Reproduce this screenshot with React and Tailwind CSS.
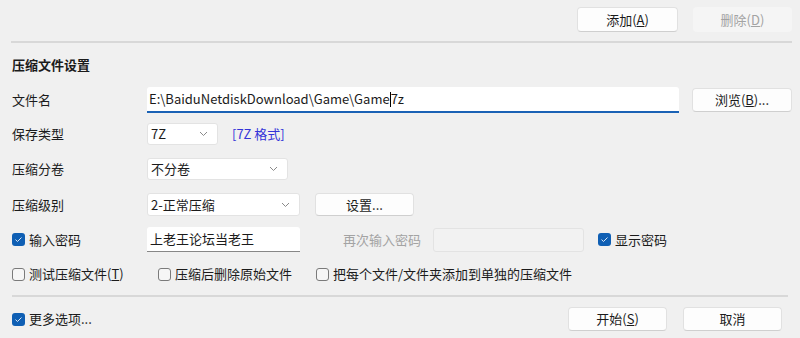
const FONT = { fontFamily: '"Noto Sans CJK SC", "Noto Sans", sans-serif' };

function Button({ children, disabled, className = "" }) {
  return (
    <div
      className={`flex items-center justify-center rounded-[4px] text-[13px] ${
        disabled
          ? "bg-[#f5f5f5] text-[#a3a3a3]"
          : "bg-[#fdfdfd] border border-[#e1e1e1] border-b-[#cfcfcf] text-[#1b1b1b]"
      } ${className}`}
    >
      {children}
    </div>
  );
}

function Chevron() {
  return (
    <svg width="9" height="6" viewBox="0 0 9 6" className="shrink-0">
      <polyline points="1,1 4.5,4.5 8,1" fill="none" stroke="#8a8a8a" strokeWidth="1" />
    </svg>
  );
}

function Select({ value, className = "" }) {
  return (
    <div className={`flex items-center justify-between bg-white border border-[#e3e3e3] rounded-[3px] pl-[3px] pr-[9px] text-[13px] text-[#1b1b1b] ${className}`}>
      <span>{value}</span>
      <Chevron />
    </div>
  );
}

function Checkbox({ checked, label }) {
  return (
    <div className="flex items-center gap-[4px] text-[13px] text-[#1b1b1b]">
      {checked ? (
        <div className="w-[13px] h-[13px] rounded-[3px] bg-[#0f5fb4] flex items-center justify-center">
          <svg width="9" height="7" viewBox="0 0 9 7">
            <polyline points="1.5,3.6 3.5,5.5 7.5,1.5" fill="none" stroke="#dbe8f6" strokeWidth="1" />
          </svg>
        </div>
      ) : (
        <div className="w-[13px] h-[13px] rounded-[3px] border border-[#7a7a7a] bg-[#f6f6f6]" />
      )}
      <span>{label}</span>
    </div>
  );
}

function Label({ children }) {
  return <div className="w-[135px] shrink-0 text-[13px] text-[#1b1b1b]">{children}</div>;
}

export default function App() {
  return (
    <div className="w-[800px] h-[338px] bg-[#f0f0f0] overflow-hidden flex flex-col" style={FONT}>
      {/* top buttons */}
      <div className="h-[41px] shrink-0 flex justify-end gap-[15px] pt-[7px] pr-[8px]">
        <Button className="w-[101px] h-[25px]">添加(<u>A</u>)</Button>
        <Button disabled className="w-[99px] h-[25px]">删除(<u>D</u>)</Button>
      </div>
      <div className="h-[2px] shrink-0 bg-[#d8d8d8] ml-[11px] mr-[8px]" />

      <div className="pl-[12px] flex flex-col">
        <div className="h-[44px] flex items-center text-[13px] font-bold text-[#1b1b1b]">压缩文件设置</div>

        {/* 文件名 */}
        <div className="h-[26px] flex items-center">
          <Label>文件名</Label>
          <div className="w-[532px] h-[26px] bg-white rounded-t-[3px] border-b-2 border-[#1a62b5] flex items-center pl-[2px] text-[13px] text-[#1b1b1b]">
            <span>E:\BaiduNetdiskDownload\Game\Game</span>
            <span className="w-px h-[15px] bg-black" />
            <span>7z</span>
          </div>
          <Button className="ml-[13px] w-[100px] h-[24px]">浏览(<u>B</u>)...</Button>
        </div>

        {/* 保存类型 */}
        <div className="h-[22px] mt-[10px] flex items-center">
          <Label>保存类型</Label>
          <Select value="7Z" className="w-[71px] h-[22px]" />
          <span className="ml-[14px] text-[13px] text-[#3434d8]">[7Z 格式]</span>
        </div>

        {/* 压缩分卷 */}
        <div className="h-[22px] mt-[13px] flex items-center">
          <Label>压缩分卷</Label>
          <Select value="不分卷" className="w-[141px] h-[22px]" />
        </div>

        {/* 压缩级别 */}
        <div className="h-[23px] mt-[13px] flex items-center">
          <Label>压缩级别</Label>
          <Select value="2-正常压缩" className="w-[153px] h-[23px]" />
          <Button className="ml-[15px] w-[99px] h-[23px]">设置...</Button>
        </div>

        {/* 密码 */}
        <div className="h-[25px] mt-[11px] flex items-center">
          <div className="w-[135px] shrink-0">
            <Checkbox checked label="输入密码" />
          </div>
          <div className="w-[153px] h-[25px] bg-white rounded-t-[3px] border-b border-[#878787] flex items-center pl-[3px] text-[13px] text-[#1b1b1b]">
            上老王论坛当老王
          </div>
          <span className="ml-[43px] w-[90px] text-[13px] text-[#a3a3a3]">再次输入密码</span>
          <div className="w-[151px] h-[24px] border border-[#e3e3e3] rounded-[3px] bg-[#f2f2f2]" />
          <div className="ml-[14px]">
            <Checkbox checked label="显示密码" />
          </div>
        </div>

        {/* 选项 */}
        <div className="h-[20px] mt-[12px] flex items-center">
          <div className="w-[146px]">
            <Checkbox label={<>测试压缩文件(<u>T</u>)</>} />
          </div>
          <div className="w-[158px]">
            <Checkbox label="压缩后删除原始文件" />
          </div>
          <Checkbox label="把每个文件/文件夹添加到单独的压缩文件" />
        </div>
      </div>

      <div className="h-[2px] shrink-0 bg-[#d8d8d8] mt-[11px] ml-[12px] mr-[12px]" />

      {/* bottom */}
      <div className="h-[24px] mt-[10px] flex items-center pl-[12px] pr-[18px]">
        <Checkbox checked label="更多选项..." />
        <div className="ml-auto flex gap-[16px]">
          <Button className="w-[99px] h-[24px]">开始(<u>S</u>)</Button>
          <Button className="w-[99px] h-[24px]">取消</Button>
        </div>
      </div>
    </div>
  );
}
